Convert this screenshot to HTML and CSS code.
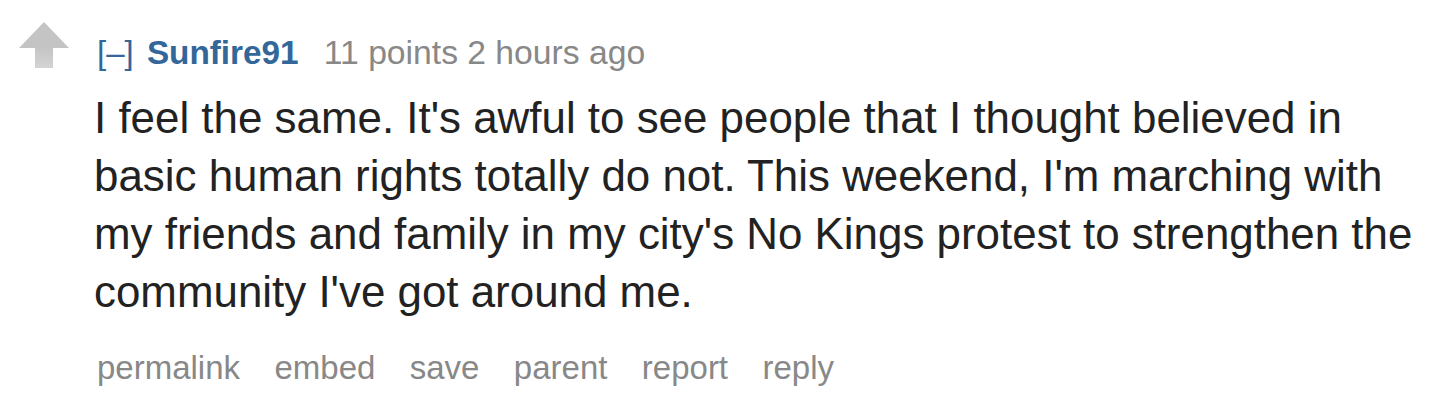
FILE: index.html
```html
<!DOCTYPE html>
<html lang="en">
<head>
<meta charset="utf-8">
<title>Comment</title>
<link rel="stylesheet" href="styles.css">
</head>
<body>
<div class="comment">
  <div class="midcol">
    <svg class="arrow" width="52" height="48" viewBox="0 0 52 48" aria-label="upvote">
      <defs>
        <linearGradient id="stem" x1="0" y1="0" x2="0" y2="1">
          <stop offset="0" stop-color="#c4c4c4"/>
          <stop offset="1" stop-color="#d4d4d4"/>
        </linearGradient>
      </defs>
      <polygon points="25,0 50,26 0,26" fill="#c4c4c4"/>
      <rect x="16" y="25" width="18" height="21" fill="url(#stem)"/>
    </svg>
  </div>
  <div class="entry">
    <p class="tagline">
      <a class="expand">[–]</a>
      <a class="author">Sunfire91</a>
      <span class="score">11 points</span> <span class="time">2 hours ago</span>
    </p>
    <div class="md">
      <p>I feel the same. It's awful to see people that I thought believed in basic human rights totally do not. This weekend, I'm marching with my friends and family in my city's No Kings protest to strengthen the community I've got around me.</p>
    </div>
    <ul class="buttons">
      <li>permalink</li>
      <li>embed</li>
      <li>save</li>
      <li>parent</li>
      <li>report</li>
      <li>reply</li>
    </ul>
  </div>
</div>
</body>
</html>
```

FILE: styles.css
```css
html, body {
  margin: 0;
  padding: 0;
  background: #ffffff;
}

body {
  font-family: "Liberation Sans", Arial, sans-serif;
  width: 1454px;
  height: 408px;
  overflow: hidden;
}

.comment {
  display: flex;
  padding-top: 22px;
  padding-left: 19px;
}

.midcol {
  width: 78px;
  flex: none;
}

.arrow {
  display: block;
  filter: blur(0.6px);
}

.entry {
  flex: 1;
  padding-right: 20px;
  padding-top: 10px;
}

.tagline {
  margin: 0;
  font-size: 33px;
  line-height: 40px;
  color: #888888;
  white-space: nowrap;
}

.expand {
  color: #336699;
  margin-right: 4px;
}

.author {
  color: #336699;
  font-weight: bold;
  font-size: 33.3px;
  margin-right: 16px;
}

.score,
.time {
  font-size: 33.7px;
}

.md {
  margin-top: 16px;
  color: #222222;
  font-size: 43.9px;
  line-height: 58px;
}

.md p {
  margin: 0;
  margin-left: -3px;
}

.buttons {
  list-style: none;
  margin: 27px 0 0;
  padding: 0;
  display: flex;
  gap: 34.4px;
  font-size: 33px;
  line-height: 40px;
  color: #888888;
}
```
